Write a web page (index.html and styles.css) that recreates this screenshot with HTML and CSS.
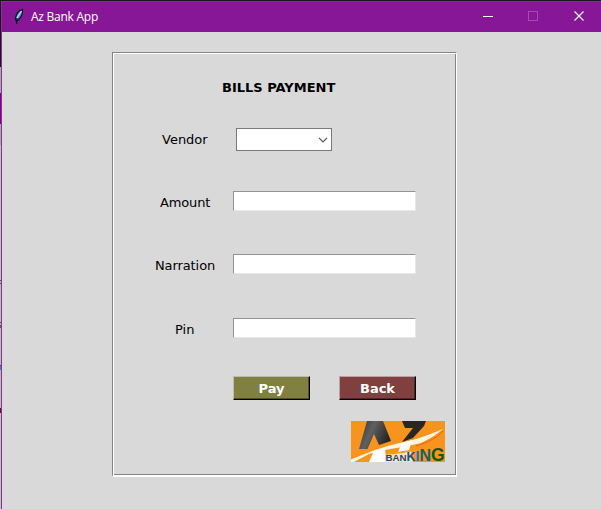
FILE: index.html
```
<!DOCTYPE html>
<html lang="en">
<head>
<meta charset="utf-8">
<title>Az Bank App</title>
<link rel="stylesheet" href="styles.css">
</head>
<body>
<div class="desktop">
  <div class="window">
    <header class="titlebar">
      <svg class="feather" width="12" height="18" viewBox="0 0 12 18">
        <path d="M3 13C1.500 9 4 3 9.500 1.500C10.500 5 8 10 4 13Z" fill="#4b86d0" stroke="#101020" stroke-width="1.200"/>
        <path d="M3.500 16L4 10" fill="none" stroke="#101020" stroke-width="1.200"/>
        <path d="M4 10L8.500 3" stroke="#c5dcf5" stroke-width="1.300"/>
      </svg>
      <span class="caption">Az Bank App</span>
      <svg class="controls" width="138" height="30" viewBox="0 0 138 30" fill="none" shape-rendering="crispEdges">
        <path d="M20 14.500H30" stroke="#fff"/>
        <rect x="65.500" y="9.500" width="9" height="9" stroke="#a74bb2"/>
        <path d="M111.500 9.500L120.500 18.500M120.500 9.500L111.500 18.500" stroke="#fff" stroke-width="1.200" shape-rendering="auto"/>
      </svg>
    </header>
    <main class="content">
      <form class="panel">
        <h1 class="heading">BILLS PAYMENT</h1>
        <div class="row row-vendor">
          <span class="label vendor">Vendor</span>
          <div class="combo">
            <svg width="10" height="6" viewBox="0 0 10 6"><path d="M1 .8L5 4.800L9 .8" fill="none" stroke="#555" stroke-width="1.200"/></svg>
          </div>
        </div>
        <div class="row row-amount"><span class="label amount">Amount</span><div class="entry"></div></div>
        <div class="row row-narration"><span class="label narration">Narration</span><div class="entry"></div></div>
        <div class="row row-pin"><span class="label pin">Pin</span><div class="entry"></div></div>
        <div class="actions">
          <button type="button" class="btn pay">Pay</button>
          <button type="button" class="btn back">Back</button>
        </div>
        <svg class="logo" width="94" height="41" viewBox="0 0 94 41">
          <defs>
            <linearGradient id="ink" x1="0" y1="0" x2="1" y2="0.4">
              <stop offset="0" stop-color="#333"/><stop offset=".45" stop-color="#606060"/><stop offset="1" stop-color="#262626"/>
            </linearGradient>
          </defs>
          <rect width="94" height="41" fill="#f7941d"/>
          <path d="M16 0H32L40 20L28 24L23 13L16.500 28H8Z" fill="url(#ink)"/>
          <path d="M51 0H75L73 5L62 17L51 21L62 7H54Z" fill="#292624"/>
          <path d="M0 38.500C22 29 38 24 58 20C73 16 82 12 92 8C86 13 79 18 70 22L57 25L34 29L18 33L3 41H0Z" fill="#fff4df"/>
          <path d="M22 32L24 29L34 27L35 41H18Z" fill="#fff"/>
          <path d="M51 22L61 19L58 29L47 31Z" fill="#fff"/>
          <path d="M34 34L52 32L60 30L62 41H34Z" fill="#fbe3bd"/>
          <path d="M65 25C78 21 87 16 92 10" fill="none" stroke="#f15a24" stroke-width="1"/>
          <path d="M36 32.500Q52 31 69 29" fill="none" stroke="#e6a71d" stroke-width="1"/>
          <text class="logo-text" x="34.500" y="40.300"><tspan font-size="9.700" fill="#2b4268">BAN</tspan><tspan font-size="12.500" fill="#205282">K</tspan><tspan font-size="14" fill="#1474ae">I</tspan><tspan font-size="16" fill="#14606a">N</tspan><tspan font-size="17.500" fill="#0c5915">G</tspan></text>
        </svg>
      </form>
    </main>
  </div>
</div>
</body>
</html>
```
FILE: styles.css
```
* { box-sizing: border-box; }
body { margin: 0; background: #d9d9d9; font-family: "DejaVu Sans", Verdana, sans-serif; font-size: 13px; color: #000; }
.desktop {
  width: 601px; height: 509px; padding: 1px 0 0 1px; overflow: hidden;
  background: linear-gradient(#1b141d 0 67px, #aaa 67px 93px, #820087 93px 124px, #aaa 124px 145px, #c3c3c3 145px 280px, #555 280px 281px, #bbb 281px 283px, #555 283px 284px, #bbb 284px 322px, #624850 322px 323px, #bbb 323px 325px, #7e5547 325px 328px, #bbb 328px 365px, #4c4550 365px 366px, #328bbd 366px 370px, #bbb 370px 408px, #5c1b0c 408px 413px, #c3c3c3 413px);
}
.window { height: 508px; border-left: 1px solid #8b2f9b; background: #d9d9d9; }
.titlebar { display: flex; align-items: center; height: 31px; padding-left: 11px; background: #881798; border-top: 1px solid #79348a; }
.feather { display: block; }
.caption { margin: 0 auto 0 6px; color: #fff; font: 12px/16px "Open Sans", sans-serif; letter-spacing: -.25px; }
.controls { display: block; }
.content { padding: 20px 0 0 110px; }
.panel { display: flex; flex-direction: column; width: 345px; height: 425px; border: 1px solid #848484; border-right-color: #fff; border-bottom: 2px solid #fff; box-shadow: inset 1px 1px #fff, inset -1px -1px #848484; }
.heading { width: 114px; height: 16px; margin: 27px 0 0 109px; font-size: 13px; line-height: 16px; font-weight: bold; white-space: nowrap; }
.row { display: flex; height: 20px; padding-left: 34px; }
.row-vendor { height: 23px; margin-top: 32px; }
.row-amount { margin-top: 40px; }
.row-narration { margin-top: 43px; }
.row-pin { margin-top: 44px; }
.label { width: 86px; padding-left: 7px; line-height: 24px; white-space: nowrap; }
.vendor { width: 89px; padding-left: 15px; }
.amount { padding-left: 13px; letter-spacing: -.15px; }
.narration { padding-left: 8px; letter-spacing: -.1px; }
.pin { padding-left: 28px; }
.combo { display: flex; align-items: center; justify-content: flex-end; width: 96px; height: 23px; padding-right: 3px; border: 1px solid #7a7a7a; background: #fff; }
.entry { width: 183px; height: 20px; border: 1px solid #949494; border-right-color: #e8e8e8; border-bottom-color: #e8e8e8; background: #fff; }
.actions { display: flex; gap: 29px; margin: 38px 0 0 120px; }
.btn { width: 77px; height: 24px; padding: 2px 0 0; border: 1px solid #bdbdad; border-right-color: #000; border-bottom-color: #000; color: #fff; font: bold 13px/20px "DejaVu Sans", Verdana, sans-serif; }
.pay { background: #808040; box-shadow: inset -1px -1px #505024; }
.back { background: #804040; border-top-color: #bca0a0; border-left-color: #bca0a0; box-shadow: inset -1px -1px #552525; }
.logo { display: block; margin: 21px 0 0 238px; overflow: visible; }
.logo-text { font-family: "Liberation Sans", Arial, sans-serif; font-weight: bold; }
```
